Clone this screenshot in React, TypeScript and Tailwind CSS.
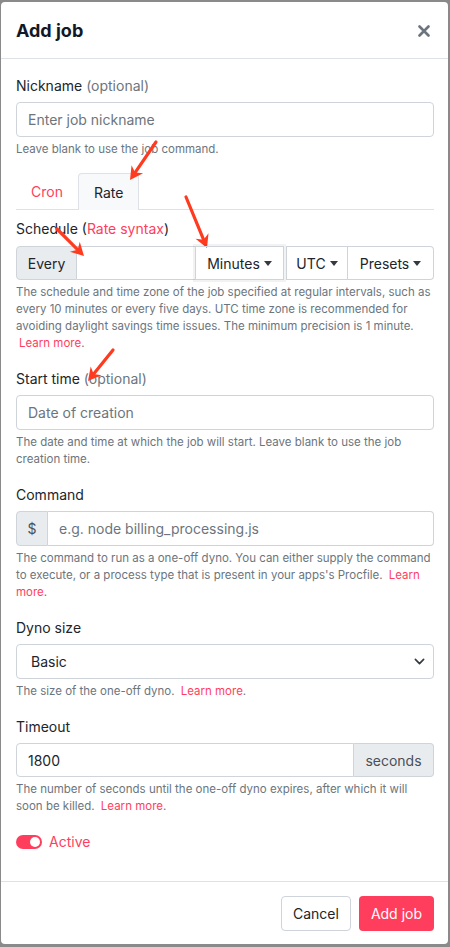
import React from 'react';

const red = 'text-[#ff3e5e]';

function Label({ children, optional }: { children: React.ReactNode; optional?: boolean }) {
  return (
    <div className="text-[14px] leading-[21px] text-[#212529] mb-[6px]">
      {children}
      {optional && <span className="text-[#6c757d]"> (optional)</span>}
    </div>
  );
}

function Help({ children }: { children: React.ReactNode }) {
  return <p className="mt-1 text-[11.5px] leading-[17px] text-[#6c757d]">{children}</p>;
}

function LearnMore() {
  return <span className={`${red} ml-[3px]`}>Learn more</span>;
}

function Caret() {
  return (
    <span className="inline-block ml-1 align-middle border-t-[5px] border-x-[4px] border-x-transparent border-t-[#343a40]" />
  );
}

function Arrow({ x1, y1, x2, y2 }: { x1: number; y1: number; x2: number; y2: number }) {
  const a = Math.atan2(y2 - y1, x2 - x1);
  const len = 13;
  const w = 7;
  const bx = x2 - Math.cos(a) * len;
  const by = y2 - Math.sin(a) * len;
  const nx = -Math.sin(a) * w;
  const ny = Math.cos(a) * w;
  const nbx = x2 - Math.cos(a) * (len - 4);
  const nby = y2 - Math.sin(a) * (len - 4);
  return (
    <g>
      <line x1={x1} y1={y1} x2={nbx} y2={nby} stroke="#ff3b1f" strokeWidth={3.2} strokeLinecap="round" />
      <polygon
        points={`${x2},${y2} ${bx + nx},${by + ny} ${nbx},${nby} ${bx - nx},${by - ny}`}
        fill="#ff3b1f"
      />
    </g>
  );
}

export default function App() {
  return (
    <div
      className="relative h-[947px] w-[450px] bg-[#8a8a8a] pt-[2px] pl-[1px] pr-[2px] pb-[3px]"
      style={{ fontFamily: 'Inter, "Noto Sans", sans-serif' }}
    >
      <div className="h-full bg-white rounded-[4px] flex flex-col overflow-hidden">
        {/* Header */}
        <div className="h-[57px] shrink-0 pl-[15px] pr-[14px] flex items-center justify-between border-b border-[#dee2e6]">
          <h2 className="text-[18px] font-bold text-[#111827]">Add job</h2>
          <svg className="w-[12px] h-[12px] mr-[4px] mt-[2px]" viewBox="0 0 12 12">
            <path d="M1.5 1.5l9 9M10.5 1.5l-9 9" stroke="#6c757d" strokeWidth="2.6" strokeLinecap="round" />
          </svg>
        </div>

        {/* Body */}
        <div className="flex-1 pl-[15px] pr-[14px] pt-4">
          <Label optional>Nickname</Label>
          <div className="h-[35px] border border-[#ced4da] rounded-[4px] px-[11px] flex items-center text-[14px] text-[#6c757d]">
            Enter job nickname
          </div>
          <Help>Leave blank to use the job command.</Help>

          {/* Tabs */}
          <div className="mt-[15px] h-[37px] flex border-b border-[#dee2e6]">
            <div className={`px-[15px] flex items-center text-[14px] ${red}`}>Cron</div>
            <div className="px-[15px] flex items-center text-[14px] text-[#212529] bg-[#f8f9fa] border border-b-0 border-[#dee2e6] rounded-t-[4px] mb-[-1px] h-[37px]">
              Rate
            </div>
          </div>

          <div className="mt-[8px]">
            <div className="text-[14px] leading-[21px] text-[#212529] mb-[7px]">
              Schedule (<span className={red}>Rate syntax</span>)
            </div>
            <div className="h-[34px] flex text-[14px] text-[#212529]">
              <div className="w-[61px] flex items-center justify-center bg-[#e9ecef] border border-[#ced4da] rounded-l-[4px]">
                Every
              </div>
              <div className="flex-1 border-y border-[#ced4da]" />
              <div className="w-[89px] flex items-center justify-center border border-[#ced4da] shadow-[0_0_0_2px_rgba(0,0,0,0.05)] relative z-10">
                Minutes
                <Caret />
              </div>
              <div className="w-[62px] ml-[2px] flex items-center justify-center border border-[#ced4da]">
                UTC
                <Caret />
              </div>
              <div className="w-[86px] flex items-center justify-center border border-l-0 border-[#ced4da] rounded-r-[4px]">
                Presets
                <Caret />
              </div>
            </div>
            <Help>
              The schedule and time zone of the job specified at regular intervals, such as every 10 minutes or
              every five days. UTC time zone is recommended for avoiding daylight savings time issues. The
              minimum precision is 1 minute. <LearnMore />.
            </Help>
          </div>

          <div className="mt-4">
            <Label optional>Start time</Label>
            <div className="h-[35px] border border-[#ced4da] rounded-[4px] px-[11px] flex items-center text-[14px] text-[#6c757d]">
              Date of creation
            </div>
            <Help>The date and time at which the job will start. Leave blank to use the job creation time.</Help>
          </div>

          <div className="mt-4">
            <Label>Command</Label>
            <div className="h-[35px] flex text-[14px]">
              <div className="w-[32px] flex items-center justify-center bg-[#e9ecef] border border-[#ced4da] rounded-l-[4px] text-[#495057]">
                $
              </div>
              <div className="flex-1 border border-l-0 border-[#ced4da] rounded-r-[4px] px-[11px] flex items-center text-[#6c757d]">
                e.g. node billing_processing.js
              </div>
            </div>
            <Help>
              The command to run as a one-off dyno. You can either supply the command to execute, or a process
              type that is present in your apps's Procfile. <LearnMore />.
            </Help>
          </div>

          <div className="mt-4">
            <Label>Dyno size</Label>
            <div className="h-[35px] border border-[#ced4da] rounded-[4px] pl-[14px] pr-[8px] flex items-center justify-between text-[14px] text-[#212529]">
              Basic
              <svg className="w-[11px] h-[11px]" viewBox="0 0 16 16">
                <path d="M2 5l6 6 6-6" fill="none" stroke="#343a40" strokeWidth="2.4" strokeLinecap="round" strokeLinejoin="round" />
              </svg>
            </div>
            <Help>
              The size of the one-off dyno. <LearnMore />.
            </Help>
          </div>

          <div className="mt-4">
            <Label>Timeout</Label>
            <div className="h-[34px] flex text-[14px] text-[#212529]">
              <div className="flex-1 border border-[#ced4da] rounded-l-[4px] px-[11px] flex items-center">1800</div>
              <div className="w-[80px] flex items-center justify-center bg-[#e9ecef] border border-l-0 border-[#ced4da] rounded-r-[4px] text-[#495057]">
                seconds
              </div>
            </div>
            <Help>
              The number of seconds until the one-off dyno expires, after which it will soon be killed.{' '}
              <LearnMore />.
            </Help>
          </div>

          <div className="mt-4 flex items-center gap-[7px]">
            <div className="w-[26px] h-[14px] rounded-full bg-[#ff3e5e] flex items-center justify-end pr-[2px]">
              <div className="w-[10px] h-[10px] rounded-full bg-white" />
            </div>
            <span className={`text-[14px] ${red}`}>Active</span>
          </div>
        </div>

        {/* Footer */}
        <div className="h-[63px] shrink-0 border-t border-[#dee2e6] pl-[15px] pr-[14px] flex items-center justify-end gap-2">
          <button className="h-[35px] px-[11px] border border-[#ced4da] rounded-[4px] text-[14px] text-[#212529] bg-white">
            Cancel
          </button>
          <button className="h-[35px] px-[12px] rounded-[4px] text-[14px] text-white bg-[#ff3e5e]">Add job</button>
        </div>
      </div>

      {/* Annotation arrows */}
      <svg className="absolute inset-0 pointer-events-none" width="450" height="947">
        <Arrow x1={156} y1={142} x2={130} y2={180} />
        <Arrow x1={57} y1={229} x2={84} y2={256} />
        <Arrow x1={186} y1={197} x2={207} y2={248} />
        <Arrow x1={113} y1={350} x2={88} y2={381} />
      </svg>
    </div>
  );
}
